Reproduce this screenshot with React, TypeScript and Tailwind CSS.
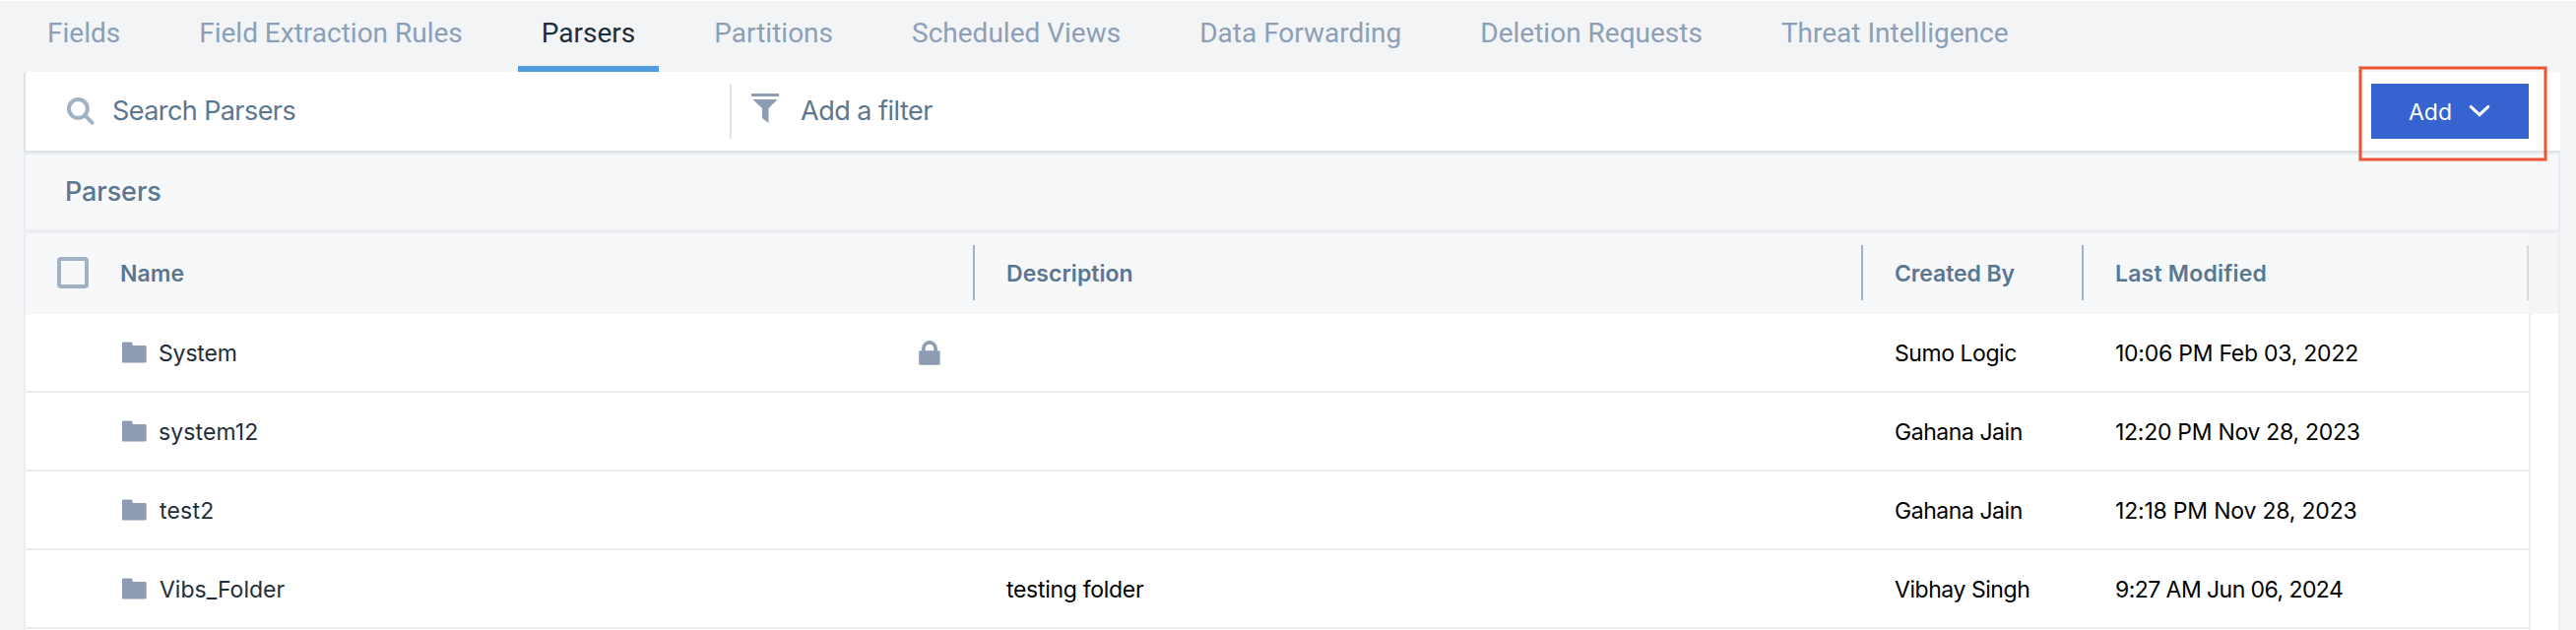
type Parser = {
  name: string;
  nameClass: string;
  locked?: boolean;
  description?: string;
  createdBy: string;
  modified: string;
  modifiedTracking: string;
};

const tabs = [
  "Fields",
  "Field Extraction Rules",
  "Parsers",
  "Partitions",
  "Scheduled Views",
  "Data Forwarding",
  "Deletion Requests",
  "Threat Intelligence",
];

const parsers: Parser[] = [
  { name: "System", nameClass: "ml-[12px] tracking-[-0.15px]", locked: true, createdBy: "Sumo Logic", modified: "10:06 PM Feb 03, 2022", modifiedTracking: "tracking-[-0.25px]" },
  { name: "system12", nameClass: "ml-[12px] tracking-[0.1px]", createdBy: "Gahana Jain", modified: "12:20 PM Nov 28, 2023", modifiedTracking: "tracking-[-0.28px]" },
  { name: "test2", nameClass: "ml-[13px] tracking-[0.2px]", createdBy: "Gahana Jain", modified: "12:18 PM Nov 28, 2023", modifiedTracking: "tracking-[-0.2px]" },
  { name: "Vibs_Folder", nameClass: "ml-[13px] tracking-normal", description: "testing folder", createdBy: "Vibhay Singh", modified: "9:27 AM Jun 06, 2024", modifiedTracking: "tracking-[-0.56px]" },
];

const SearchIcon = () => (
  <svg width="28" height="28" viewBox="0 0 28 28" fill="none" stroke="#a1b1c6" strokeWidth="4" strokeLinecap="round">
    <circle cx="11.4" cy="11.4" r="9.4" />
    <path d="M18.5 18.5 25.6 25.6" />
  </svg>
);

const FilterIcon = () => (
  <svg width="28" height="30" viewBox="0 0 28 30" fill="#8d9cb3">
    <rect width="28" height="3" rx="0.6" />
    <path d="M1.5 6h25L17.5 15v15L11 25V15z" />
  </svg>
);

const ChevronIcon = () => (
  <svg width="22" height="14" viewBox="0 0 22 14" fill="none" stroke="#fff" strokeWidth="3" strokeLinecap="round">
    <path d="M2.2 2.4 11 10.6 19.8 2.4" />
  </svg>
);

const FolderIcon = () => (
  <svg width="25" height="22" viewBox="0 0 25 22" fill="#8d9cb3">
    <path d="M1.3.5H9a1.6 1.6 0 0 1 1.6 1.6V4h12.9a1.2 1.2 0 0 1 1.2 1.2v15.2a1.2 1.2 0 0 1-1.2 1.2H1.3A1.3 1.3 0 0 1 0 20.4V1.8A1.3 1.3 0 0 1 1.3.5z" />
  </svg>
);

const LockIcon = () => (
  <svg width="22" height="25" viewBox="0 0 22 25" fill="none">
    <path d="M4.9 11.5V8a6.1 6.1 0 0 1 12.2 0v3.5" stroke="#8d9cb3" strokeWidth="3.6" />
    <rect x="0.2" y="10.2" width="21.4" height="14.6" rx="1" fill="#8d9cb3" />
  </svg>
);

const headCell = "flex h-14 items-center border-r-2 pl-8 text-[23px] font-semibold text-[#5b7690]";

export default function App() {
  return (
    <div className="flex h-[640px] w-[2616px] flex-col overflow-hidden border-t border-white bg-[#f2f4f6] font-['Inter',sans-serif] leading-none">
      <nav className="flex h-[72px] shrink-0 gap-8 pl-6 font-['Roboto',sans-serif] text-[28px]">
        {tabs.map((tab) => (
          <div
            key={tab}
            className={
              tab === "Parsers"
                ? "flex items-start border-b-[6px] border-[#4f9de0] px-6 pt-[19px] text-[#222d3a]"
                : "flex items-start px-6 pt-[19px] text-[#8d9fb6]"
            }
          >
            {tab}
          </div>
        ))}
      </nav>

      <div className="ml-6 flex h-[82px] w-[2576px] shrink-0 items-center rounded-t border-b-2 border-l-2 border-[#dde3e8] bg-white">
        <div className="flex h-full w-[715px] items-center pl-[42px]">
          <SearchIcon />
          <span className="ml-[18px] pb-px text-[27px] tracking-[-0.58px] text-[#5b7690]">Search Parsers</span>
        </div>
        <div className="flex h-14 flex-1 items-center border-l-2 border-[#dfe4e9] pl-5">
          <div className="mb-[6px]">
            <FilterIcon />
          </div>
          <span className="ml-[22px] pb-px text-[27px] tracking-[-0.5px] text-[#5b7690]">Add a filter</span>
        </div>
        <div className="relative mr-8">
          <button className="flex h-14 w-40 items-center bg-[#3563d0] pl-[38px] text-[23px] text-white">
            <span className="pt-[3px]">Add</span>
            <span className="ml-[17px]">
              <ChevronIcon />
            </span>
          </button>
          <div className="pointer-events-none absolute -top-[17px] -left-3 h-[95px] w-[190px] border-2 border-[#ee5230] shadow-[0_0_0_1px_rgba(238,82,48,0.5),inset_0_0_0_1px_rgba(238,82,48,0.5)]" />
        </div>
      </div>

      <main className="ml-6 flex w-[2576px] flex-1 flex-col border-r-2 border-l-2 border-[#ebedf0] bg-white">
        <div className="flex h-[82px] shrink-0 items-center border-t-2 border-b-4 border-[#ebedf0] bg-[#f7f8fa] pb-px pl-10 text-[27px] font-medium tracking-[-0.1px] text-[#5b7690]">
          Parsers
        </div>

        <div className="flex h-[82px] shrink-0 items-stretch border-b border-[#f4f6f5] bg-[#f7f8fa]">
          <div className="flex w-[2542px] py-3">
            <div className={`${headCell} w-[964px] border-[#a1b1c6]`}>
              <span className="mr-[32px] h-8 w-8 rounded-[4px] border-4 border-[#a1b1c6]" />
              <span className="pt-[3px]">Name</span>
            </div>
            <div className={`${headCell} w-[902px] border-[#a1b1c6] pt-[3px] tracking-[0.05px]`}>Description</div>
            <div className={`${headCell} w-[224px] border-[#a1b1c6] pt-[3px] tracking-[-0.1px]`}>Created By</div>
            <div className={`${headCell} w-[452px] border-[#d8dadd] pt-[3px] tracking-[0.2px]`}>Last Modified</div>
          </div>
          <div className="flex-1 bg-[#f4f6f5]" />
        </div>

        <div className="w-[2544px] flex-1 border-r-2 border-[#ebeef1] text-[23px]">
          {parsers.map((p) => (
            <div key={p.name} className="flex h-20 items-center border-b-2 border-[#e9eef2] text-black">
              <div className="flex w-[964px] items-center pl-[98px] text-[#222d3a]">
                <FolderIcon />
                <span className={`flex-1 pt-[3px] ${p.nameClass}`}>{p.name}</span>
                {p.locked && (
                  <span className="mr-[35px]">
                    <LockIcon />
                  </span>
                )}
              </div>
              <div className="w-[902px] pt-[3px] pl-8 tracking-[-0.3px]">{p.description}</div>
              <div className="w-[224px] pt-[3px] pl-8 tracking-[-0.45px]">{p.createdBy}</div>
              <div className={`w-[452px] pt-[3px] pl-8 ${p.modifiedTracking}`}>{p.modified}</div>
            </div>
          ))}
        </div>
      </main>
    </div>
  );
}
